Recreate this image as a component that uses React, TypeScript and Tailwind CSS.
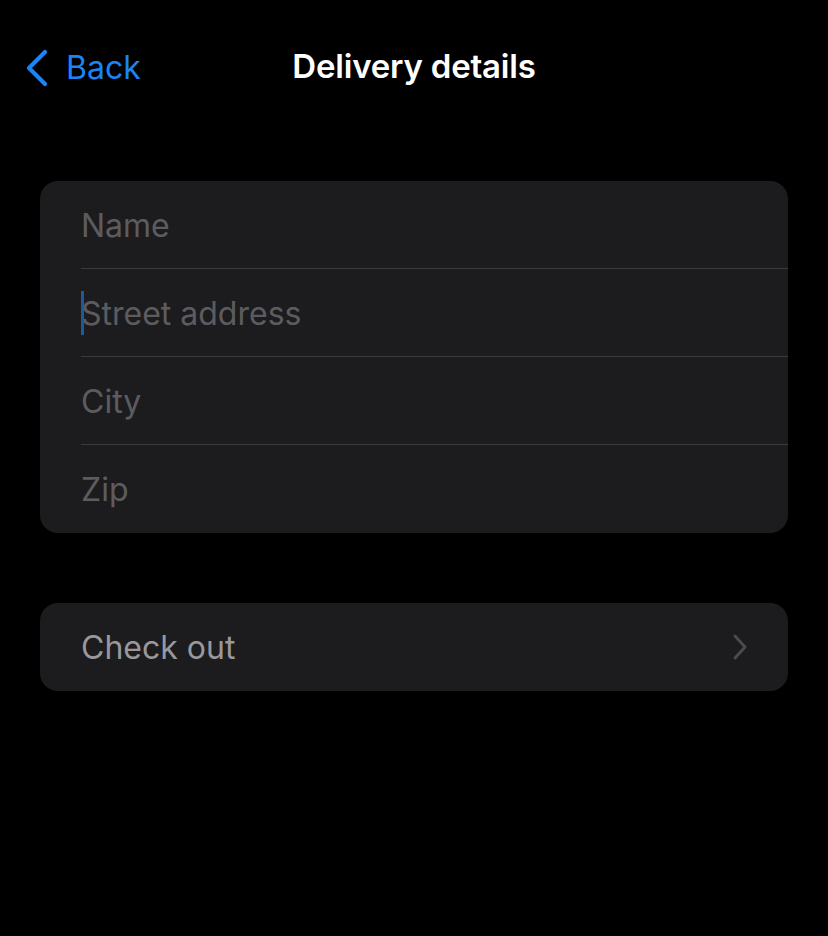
const fields = ["Name", "Street address", "City", "Zip"];

function BackButton() {
  return (
    <button className="flex items-center gap-[16px] text-[#1a84f8]">
      <svg width="26" height="38" viewBox="0 0 26 38" fill="none">
        <path
          d="M21 3 L5 19 L21 35"
          stroke="currentColor"
          strokeWidth="4.2"
          strokeLinecap="round"
          strokeLinejoin="round"
        />
      </svg>
      <span className="text-[32px] leading-none">Back</span>
    </button>
  );
}

export default function App() {
  return (
    <div className="min-h-[936px] w-[828px] bg-black font-['Inter',sans-serif]">
      <header className="relative flex h-[136px] items-start pt-[49px] pl-[24px]">
        <BackButton />
        <h1 className="absolute left-0 right-0 top-[50px] text-center text-[33px] font-semibold leading-none tracking-[-0.2px] text-white">
          Delivery details
        </h1>
      </header>

      <div className="px-[40px] pt-[45px]">
        <div className="overflow-hidden rounded-[18px] bg-[#1c1c1e]">
          {fields.map((label, i) => (
            <div key={label} className="pl-[41px]">
              <div
                className={`relative flex h-[88px] items-center ${
                  i < fields.length - 1 ? "border-b border-[#3a3a3c]" : ""
                }`}
              >
                {i === 1 && (
                  <span className="absolute left-0 top-[22px] h-[44px] w-[3px] bg-[#1e5a9a]" />
                )}
                <span className="pt-[2px] text-[32px] text-[#5c5c60]">{label}</span>
              </div>
            </div>
          ))}
        </div>

        <button className="mt-[70px] flex h-[88px] w-full items-center justify-between rounded-[18px] bg-[#1c1c1e] pl-[41px] pr-[40px]">
          <span className="pt-[2px] text-[32px] text-[#98989d]">Check out</span>
          <svg width="16" height="28" viewBox="0 0 16 28" fill="none" className="text-[#4a4a4d]">
            <path
              d="M3 3 L13 14 L3 25"
              stroke="currentColor"
              strokeWidth="3"
              strokeLinecap="round"
              strokeLinejoin="round"
            />
          </svg>
        </button>
      </div>
    </div>
  );
}
